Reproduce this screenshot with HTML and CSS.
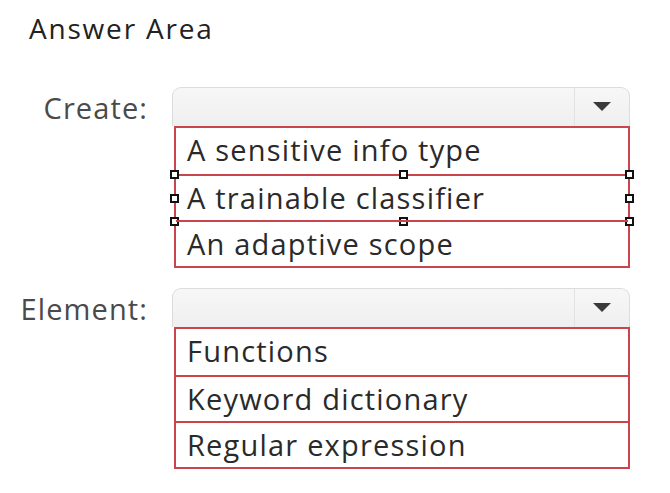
FILE: index.html
```html
<!DOCTYPE html>
<html lang="en">
<head>
<meta charset="utf-8">
<title>Answer Area</title>
<link rel="stylesheet" href="styles.css">
</head>
<body>
<div class="wrapper">
    <header>Answer Area</header>
    <div class="field">
        <label>Create:</label>
        <div class="control">
            <div class="select">
                <span class="value"></span>
                <span class="arrow"></span>
            </div>
            <ul class="options">
                <li>A sensitive info type</li>
                <li class="picked">
                    A trainable classifier
                    <i class="grip tl"></i><i class="grip tm"></i><i class="grip tr"></i>
                    <i class="grip ml"></i><i class="grip mr"></i>
                    <i class="grip bl"></i><i class="grip bm"></i><i class="grip br"></i>
                </li>
                <li>An adaptive scope</li>
            </ul>
        </div>
    </div>
    <div class="field">
        <label>Element:</label>
        <div class="control">
            <div class="select">
                <span class="value"></span>
                <span class="arrow"></span>
            </div>
            <ul class="options">
                <li>Functions</li>
                <li>Keyword dictionary</li>
                <li>Regular expression</li>
            </ul>
        </div>
    </div>
</div>
</body>
</html>
```

FILE: styles.css
```css
* {
    margin: 0;
    padding: 0;
    box-sizing: border-box;
    font-family: 'Open Sans', 'Noto Sans', sans-serif;
}

body {
    background: #fff;
    color: #333;
}

.wrapper {
    padding: 9px 0 0 0;
}

.wrapper header {
    margin-left: 29px;
    font-size: 28px;
    line-height: 38px;
    color: #222;
    letter-spacing: 1.8px;
}

.field {
    display: grid;
    grid-template-columns: 148px 458px;
    column-gap: 24px;
    margin-top: 40px;
}

.field + .field {
    margin-top: 20px;
}

.field label {
    text-align: right;
    font-size: 29px;
    line-height: 38px;
    color: #4a4a4a;
    letter-spacing: 1.1px;
    margin-top: 2px;
}

.select {
    display: flex;
    height: 39px;
    border: 1px solid #dcdcdc;
    border-bottom: none;
    border-radius: 9px 9px 0 0;
    background: linear-gradient(to bottom, #f7f7f7, #efefef);
}

.select .value {
    flex: 1;
}

.select .arrow {
    width: 55px;
    display: flex;
    align-items: center;
    justify-content: center;
    border-left: 1px solid #e2e2e2;
}

.select .arrow::after {
    content: "";
    border-left: 9px solid transparent;
    border-right: 9px solid transparent;
    border-top: 9px solid #3a3a3a;
    margin-top: -2px;
}

.options {
    list-style: none;
    margin-left: 2px;
    border: 2px solid #c9444c;
}

.options li {
    position: relative;
    height: 46px;
    padding-left: 11px;
    font-size: 29px;
    line-height: 44px;
    color: #2a2a2a;
    letter-spacing: 1.2px;
}

.options li + li {
    border-top: 2px solid #c9444c;
}

.grip {
    position: absolute;
    width: 9px;
    height: 9px;
    background: #fff;
    border: 2px solid #111;
}

.grip.tl { top: -6px; left: -6px; }
.grip.tm { top: -6px; left: 223px; }
.grip.tr { top: -6px; right: -6px; }
.grip.ml { top: 18px; left: -6px; }
.grip.mr { top: 18px; right: -6px; }
.grip.bl { bottom: -6px; left: -6px; }
.grip.bm { bottom: -6px; left: 223px; }
.grip.br { bottom: -6px; right: -6px; }
```
